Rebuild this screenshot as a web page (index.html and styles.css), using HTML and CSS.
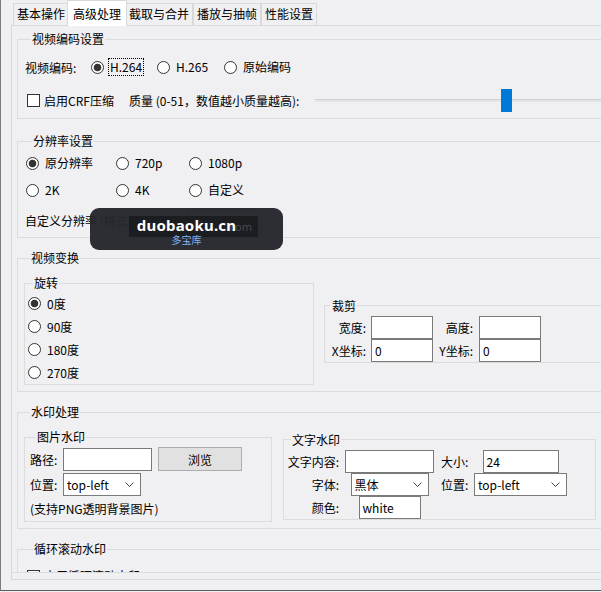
FILE: index.html
```html
<!DOCTYPE html>
<html lang="zh-CN">
<head>
<meta charset="utf-8">
<title>高级处理</title>
<link rel="stylesheet" href="styles.css">
</head>
<body>
<div class="window">
  <div class="tabs">
    <div class="tab">基本操作</div>
    <div class="tab active">高级处理</div>
    <div class="tab">截取与合并</div>
    <div class="tab">播放与抽帧</div>
    <div class="tab">性能设置</div>
  </div>
  <div class="panel">
    <div class="scroll">
      <fieldset class="group g1">
        <legend>视频编码设置</legend>
        <div class="row codec-row">
          <span class="codec-lbl">视频编码:</span>
          <span class="radio w66"><span class="dot on"></span><span class="rtext focus">H.264</span></span>
          <span class="radio w67"><span class="dot"></span><span class="rtext">H.265</span></span>
          <span class="radio"><span class="dot"></span><span class="rtext">原始编码</span></span>
        </div>
        <div class="row crf-row">
          <span class="check w102"><span class="box"></span><span>启用CRF压缩</span></span>
          <span class="q-lbl">质量 (0-51，数值越小质量越高):</span>
          <span class="slider"><span class="track"></span><span class="thumb"></span></span>
        </div>
      </fieldset>

      <fieldset class="group g2">
        <legend>分辨率设置</legend>
        <div class="row res-row">
          <span class="radio w90"><span class="dot on"></span><span class="rtext">原分辨率</span></span>
          <span class="radio w73"><span class="dot"></span><span class="rtext">720p</span></span>
          <span class="radio"><span class="dot"></span><span class="rtext">1080p</span></span>
        </div>
        <div class="row res-row second">
          <span class="radio w90"><span class="dot"></span><span class="rtext">2K</span></span>
          <span class="radio w73"><span class="dot"></span><span class="rtext">4K</span></span>
          <span class="radio"><span class="dot"></span><span class="rtext">自定义</span></span>
        </div>
        <div class="row custom-row">
          <span class="custom-lbl">自定义分辨率 (格式: 宽x高)</span>
          <span class="field custom-input"></span>
        </div>
      </fieldset>

      <fieldset class="group g3">
        <legend>视频变换</legend>
        <div class="pair">
          <fieldset class="group rot">
            <legend>旋转</legend>
            <div class="row rrow"><span class="radio"><span class="dot on"></span><span class="rtext">0度</span></span></div>
            <div class="row rrow"><span class="radio"><span class="dot"></span><span class="rtext">90度</span></span></div>
            <div class="row rrow"><span class="radio"><span class="dot"></span><span class="rtext">180度</span></span></div>
            <div class="row rrow"><span class="radio"><span class="dot"></span><span class="rtext">270度</span></span></div>
          </fieldset>
          <fieldset class="group crop">
            <legend>裁剪</legend>
            <div class="crop-grid">
              <span class="glbl r5">宽度:</span>
              <span class="field"></span>
              <span class="glbl r6">高度:</span>
              <span class="field"></span>
              <span class="glbl r5">X坐标:</span>
              <span class="field">0</span>
              <span class="glbl r6">Y坐标:</span>
              <span class="field">0</span>
            </div>
          </fieldset>
        </div>
      </fieldset>

      <fieldset class="group g4">
        <legend>水印处理</legend>
        <div class="pair">
          <fieldset class="group img">
            <legend>图片水印</legend>
            <div class="row irow1">
              <span class="plbl">路径:</span>
              <span class="field path-input"></span>
              <span class="btn">浏览</span>
            </div>
            <div class="row irow2">
              <span class="plbl">位置:</span>
              <span class="select w78"><span>top-left</span><svg class="chev" width="9" height="5" viewBox="0 0 9 5"><polyline points="0.5,0.5 4.5,4.5 8.5,0.5" fill="none" stroke="#444" stroke-width="1"/></svg></span>
            </div>
            <div class="irow3">(支持PNG透明背景图片)</div>
          </fieldset>
          <fieldset class="group txt">
            <legend>文字水印</legend>
            <div class="txt-grid">
              <span class="glbl right">文字内容:</span>
              <span class="field w89"></span>
              <span class="glbl left">大小:</span>
              <span class="field w76">24</span>
              <span class="glbl right">字体:</span>
              <span class="select w78"><span>黑体</span><svg class="chev" width="9" height="5" viewBox="0 0 9 5"><polyline points="0.5,0.5 4.5,4.5 8.5,0.5" fill="none" stroke="#444" stroke-width="1"/></svg></span>
              <span class="glbl left">位置:</span>
              <span class="select w93"><span>top-left</span><svg class="chev" width="9" height="5" viewBox="0 0 9 5"><polyline points="0.5,0.5 4.5,4.5 8.5,0.5" fill="none" stroke="#444" stroke-width="1"/></svg></span>
              <span class="glbl right">颜色:</span>
              <span class="field w62">white</span>
            </div>
          </fieldset>
        </div>
      </fieldset>

      <fieldset class="group g5">
        <legend>循环滚动水印</legend>
        <div class="row loop-row">
          <span class="check"><span class="box"></span><span class="loop-text">启用循环滚动水印</span></span>
        </div>
      </fieldset>
    </div>
  </div>

  <div class="badge">
    <span class="badge-shade"><span class="faint">.com</span></span>
    <span class="badge-text">
      <span class="badge-main">duobaoku.cn</span>
      <span class="badge-sub">多宝库</span>
    </span>
  </div>
</div>
</body>
</html>
```

FILE: styles.css
```css
* { box-sizing: border-box; }
html, body { margin: 0; padding: 0; }
body {
  width: 601px;
  height: 592px;
  overflow: hidden;
  background: #f0eff1;
  font-family: "Noto Sans CJK SC", sans-serif;
  font-size: 12px;
  color: #000;
}
.window {
  position: relative;
  width: 601px;
  height: 591px;
  border-left: 1px solid #7d7d7d;
  border-bottom: 1px solid #5a5a5a;
  overflow: hidden;
}

/* tabs */
.tabs {
  display: flex;
  align-items: flex-end;
  height: 25px;
  padding-left: 12px;
}
.tab {
  height: 22px;
  padding: 0 3px;
  border: 1px solid #d9d9d9;
  border-bottom: none;
  line-height: 20px;
  white-space: nowrap;
  background: #f0eff1;
}
.tab.active {
  position: relative;
  z-index: 1;
  height: 26px;
  margin: 0 -2px -1px;
  padding: 3px 5px 0;
  background: #fff;
}

/* panel */
.panel {
  margin-left: 10px;
  width: 700px;
  height: 555px;
  border: 1px solid #d9d9d9;
}
.scroll {
  height: 547px;
  overflow: hidden;
  border-bottom: 1px solid #dcdcdc;
  padding: 5px 0 0 5px;
}

/* group boxes */
.group {
  margin: 0;
  padding: 0;
  min-width: 0;
  border: 1px solid #dcdcdc;
}
.group > legend {
  margin-left: 6px;
  padding: 0 1px;
  line-height: 16px;
  white-space: nowrap;
}
.g1 { padding: 9px 0 6px 7px; }
.g2 { margin-top: 14px; padding: 4px 0 6px 8px; }
.g3 { margin-top: 12px; padding: 9px 0 6px 6px; }
.g4 { margin-top: 12px; padding: 9px 0 6px 6px; }
.g5 { margin-top: 12px; padding: 13px 0 0 9px; }

.row {
  display: flex;
  align-items: center;
  white-space: nowrap;
}

/* radio & checkbox */
.radio {
  display: inline-flex;
  align-items: center;
  gap: 4px;
  flex: none;
}
.dot {
  width: 13px;
  height: 13px;
  border: 1px solid #333;
  border-radius: 50%;
  background: #fff;
  flex: none;
}
.dot.on {
  background: radial-gradient(circle, #333 0 3.4px, #fff 4.2px);
}
.rtext {
  padding: 0 1px;
  border: 1px dotted transparent;
  line-height: 16px;
}
.rtext.focus { border-color: #000; }
.check {
  display: inline-flex;
  align-items: center;
  gap: 4px;
  flex: none;
}
.box {
  width: 13px;
  height: 13px;
  border: 1px solid #333;
  background: #fff;
  flex: none;
}
.w66 { width: 66px; }
.w67 { width: 67px; }
.w73 { width: 73px; }
.w90 { width: 90px; }
.w102 { width: 102px; }

/* group 1 */
.codec-row { height: 22px; }
.codec-lbl { width: 66px; flex: none; }
.crf-row { height: 24px; margin-top: 10px; }
.crf-row .check { margin-left: 2px; }
.q-lbl { width: 186px; flex: none; }
.slider {
  position: relative;
  flex: 1;
  height: 24px;
  display: flex;
  align-items: center;
}
.track {
  width: 100%;
  height: 3px;
  background: #e4e3e5;
  border-top: 1px solid #d2d2d2;
}
.thumb {
  position: absolute;
  left: 186px;
  top: 1px;
  width: 11px;
  height: 23px;
  background: #0078d7;
}

/* group 2 */
.res-row { height: 20px; }
.res-row.second { margin-top: 7px; }
.custom-row { height: 22px; margin-top: 9px; margin-left: -1px; }
.custom-lbl { width: 162px; flex: none; }

/* fields */
.field {
  display: block;
  height: 23px;
  border: 1px solid #7a7a7a;
  background: #fff;
  padding-left: 3px;
  line-height: 21px;
  white-space: nowrap;
}
.custom-input { width: 75px; height: 22px; }
.select {
  display: flex;
  align-items: center;
  justify-content: space-between;
  height: 23px;
  border: 1px solid #7a7a7a;
  background: #fff;
  padding: 0 6px 0 3px;
  line-height: 21px;
}
.chev { flex: none; }
.btn {
  display: flex;
  align-items: center;
  justify-content: center;
  width: 84px;
  height: 24px;
  margin-left: 6px;
  background: #e1e1e1;
  border: 1px solid #adadad;
}

/* group 3 */
.pair {
  display: flex;
  align-items: center;
}
.rot {
  width: 290px;
  flex: none;
  padding: 1px 0 0 3px;
}
.rot > legend { margin-left: 5px; }
.rrow { height: 23px; }
.crop {
  flex: 1;
  margin-left: 10px;
  padding: 2px 0 0 0;
}
.crop-grid {
  display: grid;
  grid-template-columns: 46px 62px 46px 62px;
  grid-auto-rows: 23px;
}
.glbl {
  line-height: 23px;
  white-space: nowrap;
}
.r5 { text-align: right; padding-right: 5px; }
.r6 { text-align: right; padding-right: 6px; }

/* group 4 */
.img {
  width: 248px;
  flex: none;
  padding: 2px 0 4px 5px;
}
.irow1 { height: 24px; }
.irow2 { height: 23px; margin-top: 2px; }
.irow3 { line-height: 16px; margin-top: 5px; }
.plbl { width: 33px; flex: none; }
.path-input { width: 89px; }
.w78 { width: 78px; }
.txt {
  width: 313px;
  flex: none;
  margin-left: 11px;
  padding: 2px 0 0 1px;
}
.txt-grid {
  display: grid;
  grid-template-columns: 60px 89px 40px 93px;
  grid-auto-rows: 23px;
  align-items: center;
}
.txt-grid > .field, .txt-grid > .select { justify-self: center; }
.right { text-align: right; padding-right: 6px; }
.left { padding-left: 7px; }
.w89 { width: 89px; }
.w76 { width: 76px; }
.w93 { width: 93px; }
.w62 { width: 62px; }

/* group 5 */
.loop-row { height: 16px; align-items: flex-start; }
.loop-row .check { align-items: flex-start; }
.loop-text { line-height: 14px; margin-top: -1px; }

/* watermark badge overlay */
.badge {
  position: absolute;
  left: 89px;
  top: 208px;
  width: 193px;
  height: 42px;
  border-radius: 9px;
  background: rgba(38, 39, 44, 0.97);
  display: grid;
  z-index: 5;
}
.badge-shade {
  grid-area: 1 / 1;
  margin: 8px 0 0 39px;
  width: 129px;
  height: 21px;
  background: #1c1d20;
  display: flex;
  justify-content: flex-end;
  align-items: center;
  padding-right: 6px;
}
.faint {
  color: #4a4b50;
  font-family: "Noto Sans", sans-serif;
  font-size: 11px;
}
.badge-text {
  grid-area: 1 / 1;
  display: flex;
  flex-direction: column;
  align-items: center;
  padding-top: 8px;
}
.badge-main {
  font-family: "Noto Sans", sans-serif;
  font-weight: 700;
  font-size: 15px;
  line-height: 18px;
  color: #fff;
  letter-spacing: 0.2px;
}
.badge-sub {
  font-size: 10px;
  line-height: 12px;
  color: #7eb2f4;
}
```
